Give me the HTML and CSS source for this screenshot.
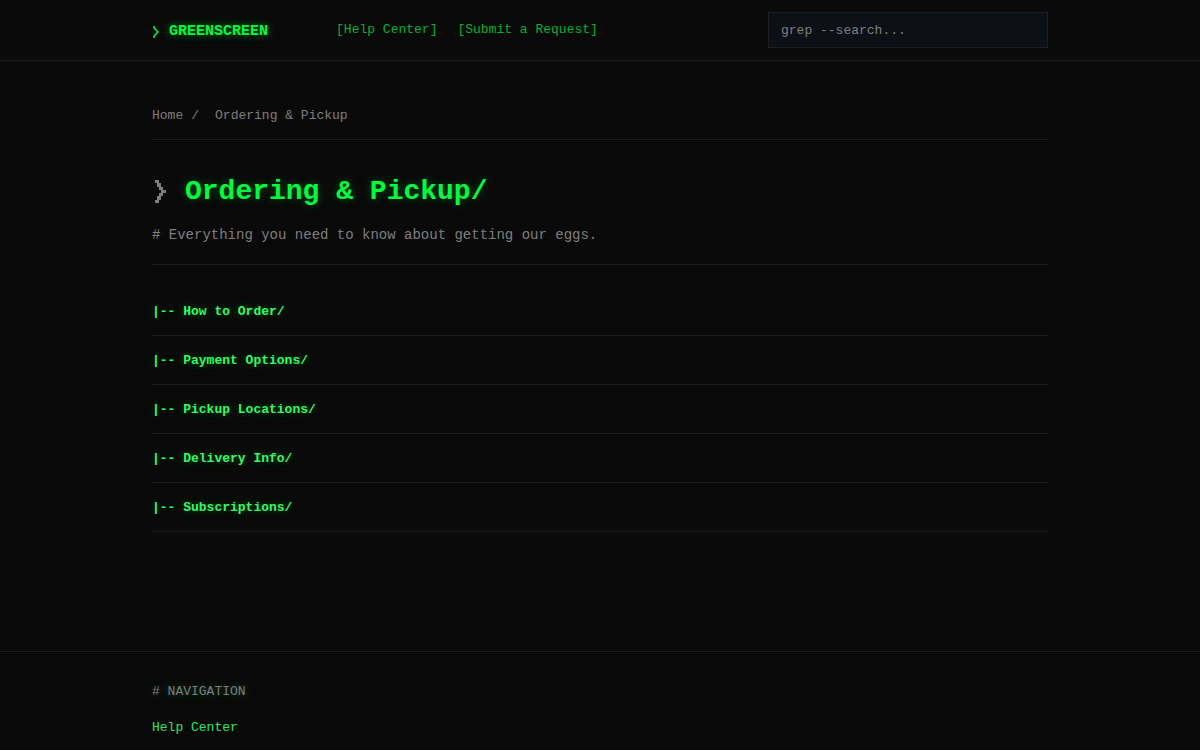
FILE: index.html
```
<!DOCTYPE html>
<html lang="en">
<head>
    <meta charset="UTF-8">
    <meta name="viewport" content="width=device-width, initial-scale=1.0">
    <title>Ordering &amp; Pickup</title>
    <link rel="stylesheet" href="styles.css">
</head>
<body>
    <header class="header">
        <div class="container header-inner">
            <a href="#" class="logo">
                <svg class="prompt" viewBox="0 0 8 14" aria-hidden="true"><path d="M2 1v2l4 4-4 4v2"/></svg>
                GREENSCREEN
            </a>
            <nav class="nav">
                <a href="#">[Help Center]</a>
                <a href="#">[Submit a Request]</a>
            </nav>
            <form class="search">
                <input type="search" placeholder="grep --search..." aria-label="Search">
            </form>
        </div>
    </header>

    <main class="container main">
        <nav class="breadcrumbs" aria-label="Breadcrumbs">
            <a href="#">Home</a>
            <span>/</span>
            <span class="current">Ordering &amp; Pickup</span>
        </nav>

        <div class="page-header">
            <h1>
                <svg class="prompt" viewBox="0 0 17 26" aria-hidden="true"><path d="M3 1h4v3h2v4h2v3h3v3h-3v3h-2v4h-2v3h-4v-3h2v-4h2v-3h2v-3h-2v-3h-2v-4h-2z"/></svg>
                Ordering &amp; Pickup/
            </h1>
            <p># Everything you need to know about getting our eggs.</p>
        </div>

        <ul class="sections">
            <li><a href="#">|-- How to Order/</a></li>
            <li><a href="#">|-- Payment Options/</a></li>
            <li><a href="#">|-- Pickup Locations/</a></li>
            <li><a href="#">|-- Delivery Info/</a></li>
            <li><a href="#">|-- Subscriptions/</a></li>
        </ul>
    </main>

    <footer class="footer">
        <div class="container">
            <h2># NAVIGATION</h2>
            <a href="#">Help Center</a>
        </div>
    </footer>
</body>
</html>
```
FILE: styles.css
```
* {
    box-sizing: border-box;
}
body {
    margin: 0;
    background-color: #0a0a0a;
    color: #808080;
    font-family: "Liberation Mono", "Courier New", monospace;
    font-size: 13px;
    line-height: 20px;
}
/* faint scanlines over the whole screen */
body::after {
    content: "";
    position: fixed;
    inset: 0;
    background: repeating-linear-gradient(transparent 0 2px, rgba(0, 0, 0, 0.03) 2px 4px);
    pointer-events: none;
}
a {
    color: inherit;
    text-decoration: none;
}
.container {
    max-width: 944px;
    margin: 0 auto;
    padding: 0 24px;
}

/* header */
.header {
    padding: 12px 0;
    border-bottom: 1px solid #1e1e1e;
}
.header-inner {
    display: flex;
    align-items: center;
}
.logo {
    display: flex;
    align-items: center;
    gap: 9px;
    padding-top: 4px;
    color: #00ff41;
    font-size: 15px;
    font-weight: bold;
    text-shadow: 0 0 8px rgba(0, 255, 65, 0.5);
}
.logo .prompt {
    width: 8px;
    height: 14px;
    fill: none;
    stroke: #00ff41;
    stroke-width: 1.5;
}
.nav {
    display: flex;
    gap: 20px;
    margin-left: 68px;
    color: #00b531;
}
.search {
    width: 280px;
    margin-left: auto;
}
.search input {
    display: block;
    width: 100%;
    height: 36px;
    padding: 0 12px;
    border: 1px solid #1e2022;
    border-radius: 0;
    background-color: #0d1117;
    color: #808080;
    font-family: inherit;
    font-size: 13px;
    appearance: none;
}
.search input::placeholder {
    color: #808080;
    opacity: 1;
}

/* page */
.main {
    padding-top: 45px;
    padding-bottom: 119px;
}
.breadcrumbs {
    display: flex;
    gap: 8px;
    padding-bottom: 13px;
    border-bottom: 1px solid #1e1e1e;
}
.current {
    margin-left: 8px;
}
.page-header {
    padding: 32px 0 18px;
    border-bottom: 1px solid #1e1e1e;
}
h1 {
    display: flex;
    align-items: center;
    gap: 16px;
    margin: 0 0 12px;
    color: #00ff41;
    font-size: 28px;
    line-height: 40px;
    text-shadow: 0 0 8px rgba(0, 255, 65, 0.3);
}
h1 .prompt {
    width: 17px;
    height: 26px;
    fill: #808080;
}
.page-header p {
    margin: 0;
    font-size: 14px;
    line-height: 22px;
}
.sections {
    list-style: none;
    margin: 0;
    padding: 22px 0 0;
}
.sections li {
    padding: 15px 0 13px;
    border-bottom: 1px solid #1c1c1c;
    color: #33ff66;
    font-weight: bold;
    text-shadow: 0 0 8px rgba(0, 255, 65, 0.3);
}

/* footer */
.footer {
    padding: 30px 0;
    border-top: 1px solid #1e1e1e;
}
.footer h2 {
    margin: 0 0 16px;
    font-size: 13px;
    font-weight: normal;
    text-shadow: 0 0 8px rgba(0, 255, 65, 0.3);
}
.footer a {
    color: #2fec5e;
}
```
